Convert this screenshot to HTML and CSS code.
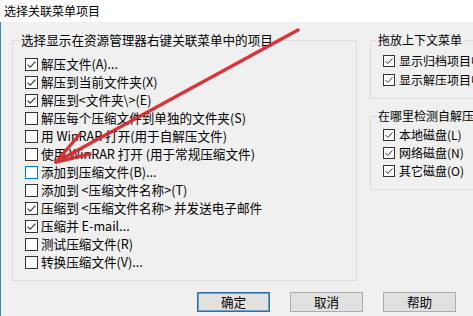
FILE: index.html
```html
<!DOCTYPE html>
<html lang="zh-CN">
<head>
<meta charset="utf-8">
<title>选择关联菜单项目</title>
<link rel="stylesheet" href="styles.css">
</head>
<body>
<div class="window">
  <div class="titlebar">选择关联菜单项目</div>
  <div class="client">
    <div class="columns">
      <fieldset class="group left">
        <legend>选择显示在资源管理器右键关联菜单中的项目</legend>
        <ul class="list">
          <li class="row"><span class="cb on"><svg viewBox="0 0 11 11"><polyline points="1.6,5.6 4.2,8.2 9.4,2.6"/></svg></span>解压文件(A)...</li>
          <li class="row"><span class="cb on"><svg viewBox="0 0 11 11"><polyline points="1.6,5.6 4.2,8.2 9.4,2.6"/></svg></span>解压到当前文件夹(X)</li>
          <li class="row"><span class="cb on"><svg viewBox="0 0 11 11"><polyline points="1.6,5.6 4.2,8.2 9.4,2.6"/></svg></span>解压到&lt;文件夹\&gt;(E)</li>
          <li class="row"><span class="cb"></span>解压每个压缩文件到单独的文件夹(S)</li>
          <li class="row"><span class="cb"></span>用 WinRAR 打开(用于自解压文件)</li>
          <li class="row"><span class="cb"></span>使用 WinRAR 打开 (用于常规压缩文件)</li>
          <li class="row"><span class="cb hover"></span>添加到压缩文件(B)...</li>
          <li class="row"><span class="cb"></span>添加到 &lt;压缩文件名称&gt;(T)</li>
          <li class="row"><span class="cb on"><svg viewBox="0 0 11 11"><polyline points="1.6,5.6 4.2,8.2 9.4,2.6"/></svg></span>压缩到 &lt;压缩文件名称&gt; 并发送电子邮件</li>
          <li class="row"><span class="cb on"><svg viewBox="0 0 11 11"><polyline points="1.6,5.6 4.2,8.2 9.4,2.6"/></svg></span>压缩并 E-mail...</li>
          <li class="row"><span class="cb"></span>测试压缩文件(R)</li>
          <li class="row"><span class="cb"></span>转换压缩文件(V)...</li>
        </ul>
      </fieldset>
      <div class="rightcol">
        <fieldset class="group drag">
          <legend>拖放上下文菜单</legend>
          <ul class="list small">
            <li class="row tall"><span class="cb on"><svg viewBox="0 0 11 11"><polyline points="1.6,5.6 4.2,8.2 9.4,2.6"/></svg></span>显示归档项目中的文件</li>
            <li class="row tall"><span class="cb on"><svg viewBox="0 0 11 11"><polyline points="1.6,5.6 4.2,8.2 9.4,2.6"/></svg></span>显示解压项目中的文件</li>
          </ul>
        </fieldset>
        <fieldset class="group detect">
          <legend>在哪里检测自解压文件</legend>
          <ul class="list small">
            <li class="row"><span class="cb on"><svg viewBox="0 0 11 11"><polyline points="1.6,5.6 4.2,8.2 9.4,2.6"/></svg></span>本地磁盘(L)</li>
            <li class="row"><span class="cb on"><svg viewBox="0 0 11 11"><polyline points="1.6,5.6 4.2,8.2 9.4,2.6"/></svg></span>网络磁盘(N)</li>
            <li class="row"><span class="cb on"><svg viewBox="0 0 11 11"><polyline points="1.6,5.6 4.2,8.2 9.4,2.6"/></svg></span>其它磁盘(O)</li>
          </ul>
        </fieldset>
      </div>
    </div>
    <div class="buttons">
      <button class="btn default">确定</button>
      <button class="btn">取消</button>
      <button class="btn">帮助</button>
    </div>
  </div>
  <svg class="arrow" width="473" height="316" viewBox="0 0 473 316">
    <g stroke="#d7262b" stroke-width="3.4" stroke-linecap="round" fill="none" opacity="0.92">
      <line x1="298" y1="30" x2="56" y2="162"/>
      <line x1="56" y1="162" x2="80" y2="134"/>
      <line x1="56" y1="162" x2="90" y2="154"/>
    </g>
  </svg>
</div>
</body>
</html>
```
FILE: styles.css
```css
html, body {
  margin: 0;
  padding: 0;
}
body {
  width: 473px;
  height: 316px;
  overflow: hidden;
  background: #f0f0f0;
  font-family: "Noto Sans CJK SC", "Noto Sans", sans-serif;
  color: #000;
}
.window {
  position: relative;
  width: 473px;
  height: 316px;
  overflow: hidden;
  background: #f0f0f0;
}
.titlebar {
  height: 22px;
  line-height: 22px;
  background: #fff;
  font-size: 12px;
  padding-left: 4px;
}
.client {
  height: 294px;
  border-left: 1px solid #2a8bd0;
  box-sizing: border-box;
  padding-top: 10px;
}
.columns {
  display: flex;
  align-items: flex-start;
  width: 600px;
}
.group {
  margin: 0;
  padding: 0;
  border: 1px solid #dcdcdc;
  box-sizing: border-box;
  min-width: 0;
}
.group legend {
  padding: 0 2px;
  line-height: 16px;
  height: 16px;
}
.left {
  margin-left: 11px;
  width: 345px;
  flex-shrink: 0;
  padding-bottom: 9px;
  font-size: 12.6px;
}
.left legend {
  margin-left: 6px;
}
.list {
  list-style: none;
  margin: 7px 0 0 0;
  padding: 0 0 0 12px;
}
.row {
  display: flex;
  align-items: center;
  height: 18px;
  white-space: nowrap;
  line-height: 18px;
}
.row.tall {
  height: 19px;
}
.cb {
  width: 13px;
  height: 13px;
  box-sizing: border-box;
  border: 1px solid #333;
  background: #fff;
  margin-right: 3px;
  flex-shrink: 0;
  display: flex;
  align-items: center;
  justify-content: center;
}
.cb svg {
  width: 11px;
  height: 11px;
}
.cb svg polyline {
  fill: none;
  stroke: #333;
  stroke-width: 1.1;
}
.cb.hover {
  border-color: #0078d7;
}
.rightcol {
  margin-left: 13px;
  width: 200px;
  flex-shrink: 0;
  font-size: 12px;
}
.drag {
  padding-bottom: 9px;
}
.drag legend,
.detect legend {
  margin-left: 5px;
}
.drag .list {
  margin-top: 3px;
}
.detect {
  margin-top: 9px;
  padding-bottom: 9px;
}
.detect .list {
  margin-top: 2px;
}
.small {
  padding-left: 12px;
}
.small .cb {
  width: 12px;
  height: 12px;
  margin-right: 4px;
}
.small .cb svg {
  width: 10px;
  height: 10px;
}
.buttons {
  display: flex;
  gap: 20px;
  margin-top: 11px;
  padding-left: 196px;
}
.btn {
  width: 73px;
  height: 20px;
  box-sizing: border-box;
  border: 1px solid #adadad;
  background: #e1e1e1;
  font-family: "Noto Sans CJK SC", sans-serif;
  font-size: 12.6px;
  line-height: 16px;
  padding: 0;
  color: #000;
}
.btn.default {
  border: 1px solid #2f6fa8;
  box-shadow: inset 0 0 0 1px #5d9fd6;
}
.arrow {
  position: absolute;
  left: 0;
  top: 0;
  pointer-events: none;
}
```
